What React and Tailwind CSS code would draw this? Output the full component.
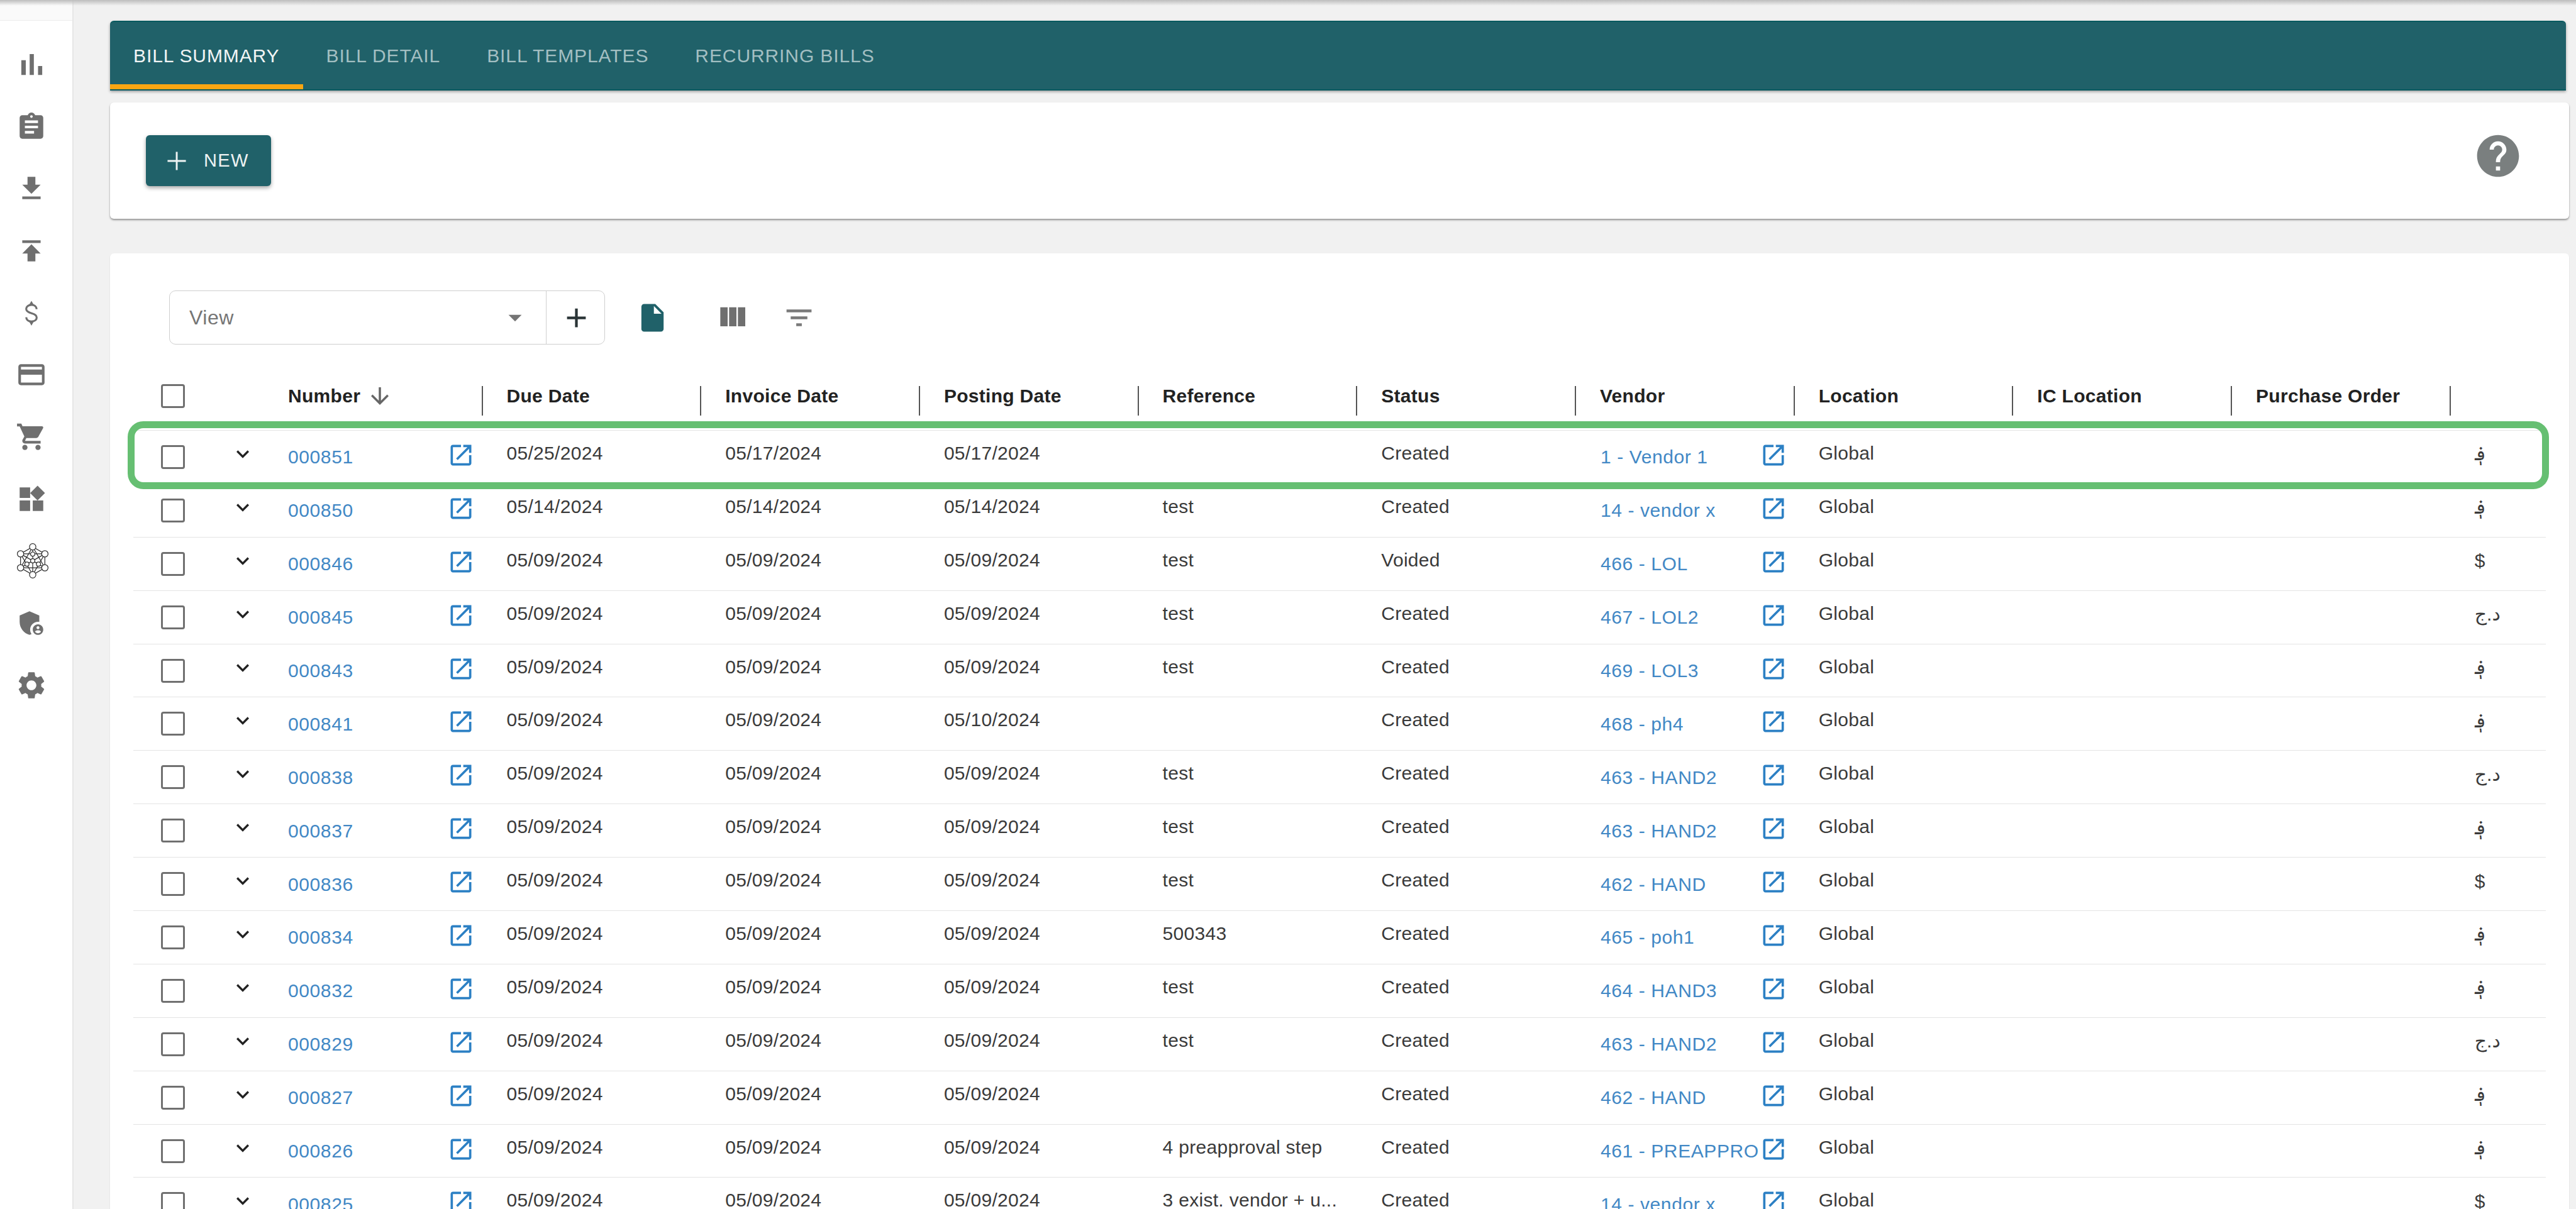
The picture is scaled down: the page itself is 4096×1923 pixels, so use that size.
const ICONS = {
  bar: 'M5 9.2h3V19H5zM10.6 5h2.8v14h-2.8zm5.6 8H19v6h-2.8z',
  assignment: 'M19 3h-4.18C14.4 1.84 13.3 1 12 1c-1.3 0-2.4.84-2.82 2H5c-1.1 0-2 .9-2 2v14c0 1.1.9 2 2 2h14c1.1 0 2-.9 2-2V5c0-1.1-.9-2-2-2zm-7 0c.55 0 1 .45 1 1s-.45 1-1 1-1-.45-1-1 .45-1 1-1zm2 14H7v-2h7v2zm3-4H7v-2h10v2zm0-4H7V7h10v2z',
  download: 'M19 9h-4V3H9v6H5l7 7 7-7zM5 18v2h14v-2H5z',
  publish: 'M5 4v2h14V4H5zm0 10h4v6h6v-6h4l-7-7-7 7z',
  card: 'M20 4H4c-1.11 0-1.99.89-1.99 2L2 18c0 1.11.89 2 2 2h16c1.11 0 2-.89 2-2V6c0-1.11-.89-2-2-2zm0 14H4v-6h16v6zm0-10H4V6h16v2z',
  cart: 'M7 18c-1.1 0-1.99.9-1.99 2S5.9 22 7 22s2-.9 2-2-.9-2-2-2zM1 2v2h2l3.6 7.59-1.35 2.45c-.16.28-.25.61-.25.96 0 1.1.9 2 2 2h12v-2H7.42c-.14 0-.25-.11-.25-.25l.03-.12.9-1.83h7.45c.75 0 1.41-.41 1.75-1.03l3.58-6.47c.08-.14.12-.31.12-.48 0-.55-.45-1-1-1H5.21l-.94-2H1zm16 16c-1.1 0-1.99.9-1.99 2s.89 2 1.99 2 2-.9 2-2-.9-2-2-2z',
  widgets: 'M13 13v8h8v-8h-8zM3 21h8v-8H3v8zM3 3v8h8V3H3zm13.66-1.31L11 7.34 16.66 13l5.66-5.66-5.66-5.65z',
  admin: 'M17 11c.34 0 .67.04 1 .09V6.27L10.5 3 3 6.27v4.91c0 4.54 3.2 8.79 7.5 9.82.55-.13 1.08-.32 1.6-.55-.69-.98-1.1-2.17-1.1-3.45 0-3.31 2.69-6 6-6zM17 13c-2.21 0-4 1.79-4 4s1.79 4 4 4 4-1.79 4-4-1.79-4-4-4zm0 1.38c.62 0 1.12.51 1.12 1.12s-.51 1.12-1.12 1.12-1.12-.51-1.12-1.12.5-1.12 1.12-1.12zm0 5.37c-.93 0-1.74-.46-2.24-1.17.05-.72 1.51-1.08 2.24-1.08s2.19.36 2.24 1.08c-.5.71-1.31 1.17-2.24 1.17z',
  settings: 'M19.14 12.94c.04-.3.06-.61.06-.94 0-.32-.02-.64-.07-.94l2.03-1.58c.18-.14.23-.41.12-.61l-1.92-3.32c-.12-.22-.37-.29-.59-.22l-2.39.96c-.5-.38-1.03-.7-1.62-.94l-.36-2.54c-.04-.24-.24-.41-.48-.41h-3.84c-.24 0-.43.17-.47.41l-.36 2.54c-.59.24-1.13.57-1.62.94l-2.39-.96c-.22-.08-.47 0-.59.22L2.74 8.87c-.12.21-.08.47.12.61l2.03 1.58c-.05.3-.09.63-.09.94s.02.64.07.94l-2.03 1.58c-.18.14-.23.41-.12.61l1.92 3.32c.12.22.37.29.59.22l2.39-.96c.5.38 1.03.7 1.62.94l.36 2.54c.05.24.24.41.48.41h3.84c.24 0 .44-.17.47-.41l.36-2.54c.59-.24 1.13-.56 1.62-.94l2.39.96c.22.08.47 0 .59-.22l1.92-3.32c.12-.22.07-.47-.12-.61l-2.01-1.58zM12 15.6c-1.98 0-3.6-1.62-3.6-3.6s1.62-3.6 3.6-3.6 3.6 1.62 3.6 3.6-1.62 3.6-3.6 3.6z',
  help: 'M12 2C6.48 2 2 6.48 2 12s4.48 10 10 10 10-4.48 10-10S17.52 2 12 2zm1 17h-2v-2h2v2zm2.07-7.75l-.9.92C13.45 12.9 13 13.5 13 15h-2v-.5c0-1.1.45-2.1 1.17-2.83l1.24-1.26c.37-.36.59-.86.59-1.41 0-1.1-.9-2-2-2s-2 .9-2 2H8c0-2.21 1.79-4 4-4s4 1.79 4 4c0 .88-.36 1.68-.93 2.25z',
  open: 'M19 19H5V5h7V3H5c-1.11 0-2 .9-2 2v14c0 1.1.89 2 2 2h14c1.1 0 2-.9 2-2v-7h-2v7zM14 3v2h3.59l-9.83 9.83 1.41 1.41L19 6.41V10h2V3h-7z',
  chevron: 'M7.41 8.59L12 13.17l4.59-4.58L18 10l-6 6-6-6 1.41-1.41z',
  add: 'M19 13h-6v6h-2v-6H5v-2h6V5h2v6h6v2z',
  addThin: 'M19 12.7h-6.3V19h-1.4v-6.3H5v-1.4h6.3V5h1.4v6.3H19z',
  arrowDown: 'M20 12l-1.41-1.41L13 16.17V4h-2v12.17l-5.58-5.59L4 12l8 8 8-8z',
  columns: 'M10 18h5V5h-5v13zm-6 0h5V5H4v13zM16 5v13h5V5h-5z',
  filter: 'M10 18h4v-2h-4v2zM3 6v2h18V6H3zm3 7h12v-2H6v2z',
  file: 'M6 2c-1.1 0-1.99.9-1.99 2L4 20c0 1.1.89 2 1.99 2H18c1.1 0 2-.9 2-2V8l-6-6H6zm7 7V3.5L18.5 9H13z',
  dropdown: 'M7 10l5 5 5-5z',
};

function Icon({ name, className }) {
  return (
    <svg viewBox="0 0 24 24" className={`shrink-0 ${className}`}>
      <path d={ICONS[name]} />
    </svg>
  );
}

// thin S with little peaks top and bottom, the filled material one is too heavy
function MoneyIcon() {
  return (
    <svg viewBox="0 0 24 24" className="h-[50px] w-[50px] shrink-0">
      <path
        d="M16 9c-.2-2-1.8-3.3-4-3.3S8 7 8 8.8c0 2 1.7 2.7 4 3.3s4 1.4 4 3.3c0 1.8-1.7 3-4 3s-3.8-1.3-4-3.2"
        fill="none"
        className="stroke-[#6f6f6f] stroke-[1.5]"
      />
      <path d="M12 2.6L10.2 5.8h3.6zM12 21.6l-1.8-3.2h3.6z" className="fill-[#6f6f6f]" />
    </svg>
  );
}

function NetworkIcon() {
  const nodes = [[12, 2.8], [20, 7.4], [20, 16.6], [12, 21.2], [4, 16.6], [4, 7.4]];
  const inner = [[12, 12], [12, 7.6], [15.8, 14.2], [8.2, 14.2]];
  return (
    <svg viewBox="0 0 24 24" className="ml-[4px] h-[58px] w-[58px] fill-white stroke-[#2b2b2b] stroke-[0.5]">
      <path
        d="M12 2.8L20 7.4V16.6L12 21.2 4 16.6V7.4zM12 2.8V21.2M4 7.4L20 16.6M20 7.4L4 16.6M12 2.8L20 16.6H4zM12 21.2L4 7.4H20z"
        fill="none"
      />
      {nodes.map(([cx, cy]) => (
        <circle key={`${cx}-${cy}`} cx={cx} cy={cy} r="2.1" />
      ))}
      {inner.map(([cx, cy]) => (
        <circle key={`${cx}-${cy}`} cx={cx} cy={cy} r="1.4" />
      ))}
    </svg>
  );
}

const SIDE_ICONS = [
  ['bar', 'h-[57px] w-[57px]'],
  ['assignment', 'h-[50px] w-[50px]'],
  ['download', 'h-[50px] w-[50px]'],
  ['publish', 'h-[50px] w-[50px]'],
  ['money', ''],
  ['card', 'h-[50px] w-[50px]'],
  ['cart', 'h-[50px] w-[50px]'],
  ['widgets', 'h-[50px] w-[50px]'],
  ['network', ''],
  ['admin', 'h-[50px] w-[50px]'],
  ['settings', 'h-[52px] w-[52px]'],
];

const TABS = ['Bill Summary', 'Bill Detail', 'Bill Templates', 'Recurring Bills'];

const HEADERS = ['Due Date', 'Invoice Date', 'Posting Date', 'Reference', 'Status'];
const HEADERS_AFTER = ['Location', 'IC Location', 'Purchase Order'];

const AFN = '؋';
const DZD = 'د.ج';

const ROWS = [
  ['000851', '05/25/2024', '05/17/2024', '05/17/2024', '', 'Created', '1 - Vendor 1', AFN],
  ['000850', '05/14/2024', '05/14/2024', '05/14/2024', 'test', 'Created', '14 - vendor x', AFN],
  ['000846', '05/09/2024', '05/09/2024', '05/09/2024', 'test', 'Voided', '466 - LOL', '$'],
  ['000845', '05/09/2024', '05/09/2024', '05/09/2024', 'test', 'Created', '467 - LOL2', DZD],
  ['000843', '05/09/2024', '05/09/2024', '05/09/2024', 'test', 'Created', '469 - LOL3', AFN],
  ['000841', '05/09/2024', '05/09/2024', '05/10/2024', '', 'Created', '468 - ph4', AFN],
  ['000838', '05/09/2024', '05/09/2024', '05/09/2024', 'test', 'Created', '463 - HAND2', DZD],
  ['000837', '05/09/2024', '05/09/2024', '05/09/2024', 'test', 'Created', '463 - HAND2', AFN],
  ['000836', '05/09/2024', '05/09/2024', '05/09/2024', 'test', 'Created', '462 - HAND', '$'],
  ['000834', '05/09/2024', '05/09/2024', '05/09/2024', '500343', 'Created', '465 - poh1', AFN],
  ['000832', '05/09/2024', '05/09/2024', '05/09/2024', 'test', 'Created', '464 - HAND3', AFN],
  ['000829', '05/09/2024', '05/09/2024', '05/09/2024', 'test', 'Created', '463 - HAND2', DZD],
  ['000827', '05/09/2024', '05/09/2024', '05/09/2024', '', 'Created', '462 - HAND', AFN],
  ['000826', '05/09/2024', '05/09/2024', '05/09/2024', '4 preapproval step', 'Created', '461 - PREAPPRO', AFN],
  ['000825', '05/09/2024', '05/09/2024', '05/09/2024', '3 exist. vendor + u...', 'Created', '14 - vendor x', '$'],
];

function Checkbox() {
  return <div className="ml-[44px] h-[38px] w-[38px] shrink-0 rounded-[4px] border-[3px] border-[#707070]" />;
}

function HeaderCell({ label, className }) {
  return (
    <div className={`flex h-full shrink-0 items-center ${className}`}>
      <span className="flex flex-1 items-center whitespace-nowrap">{label}</span>
      <span className="mt-[15px] h-[47px] w-[2px] bg-[#555]" />
    </div>
  );
}

function Cell({ children }) {
  return (
    <div className="w-[347.7px] shrink-0 whitespace-nowrap pb-[13px] pl-[38px]">{children}</div>
  );
}

function Row({ row }) {
  const [number, due, invoice, posting, reference, status, vendor, currency] = row;
  return (
    <div className="flex h-[84.9px] items-center border-b-[1.5px] border-[#e4e4e4] tracking-[0.3px] text-[#3a3a3a]">
      <div className="flex w-[246px] shrink-0 items-center">
        <Checkbox />
        <Icon name="chevron" className="mb-[10px] ml-[72px] h-[40px] w-[40px] fill-[#222]" />
      </div>
      <div className="flex w-[309.5px] shrink-0 items-center">
        <a className="flex-1 tracking-[0.6px] text-[#4288c5]">{number}</a>
        <Icon name="open" className="mb-[6px] mr-[13px] h-[44px] w-[44px] fill-[#2c80c4]" />
      </div>
      <Cell>{due}</Cell>
      <Cell>{invoice}</Cell>
      <Cell>{posting}</Cell>
      <Cell>{reference}</Cell>
      <Cell>{status}</Cell>
      <div className="flex w-[347.7px] shrink-0 items-center pl-[39px] pr-[12px]">
        <a className="min-w-0 flex-1 whitespace-nowrap tracking-[0.6px] text-[#4288c5]">{vendor}</a>
        <Icon name="open" className="mb-[6px] h-[44px] w-[44px] fill-[#2c80c4]" />
      </div>
      <Cell>Global</Cell>
      <Cell />
      <Cell />
      <div className="pb-[10px] pl-[38px]">{currency}</div>
    </div>
  );
}

export default function App() {
  return (
    <div className="relative flex h-[1923px] w-[4096px] overflow-hidden bg-[#f1f1f1] font-['Liberation_Sans','DejaVu_Sans',sans-serif] text-[30px]">
      {/* top shadow */}
      <div className="absolute inset-x-0 top-0 z-10 h-[9px] bg-gradient-to-b from-[#bdbdbd] to-transparent" />

      {/* Sidebar */}
      <aside className="w-[117px] shrink-0 border-r-[2px] border-[#e6e6e6] bg-white">
        <div className="h-[33px] border-b-[1.5px] border-[#ececec] bg-[#fafafa]" />
        <div className="flex w-[100px] flex-col pt-[20.5px]">
          {SIDE_ICONS.map(([name, size]) => (
            <div key={name} className="flex h-[98.7px] items-center justify-center">
              {name === 'network' && <NetworkIcon />}
              {name === 'money' && <MoneyIcon />}
              {name !== 'network' && name !== 'money' && <Icon name={name} className={`${size} fill-[#6f6f6f]`} />}
            </div>
          ))}
        </div>
      </aside>

      {/* Main */}
      <main className="min-w-0 flex-1 pl-[58px] pr-[11px] pt-[33px]">
        <div className="flex h-[111px] w-[3905px] overflow-hidden rounded-t-[6px] border-y-[2px] border-[#07595f] bg-[#206169] shadow-[0_2px_4px_rgba(0,0,0,0.35)]">
          {TABS.map((tab, i) => (
            <div
              key={tab}
              className={`flex h-full items-center border-b-[8px] px-[37px] pt-[8px] uppercase tracking-[0.9px] ${
                i === 0 ? 'border-[#f9a612] text-[#f1f5f5]' : 'border-transparent text-[#a3bfc2]'
              }`}
            >
              {tab}
            </div>
          ))}
        </div>

        <div className="mt-[19px] flex h-[185px] items-start justify-between rounded-[6px] bg-white pl-[57px] pr-[73px] pt-[45px] shadow-[0_2px_3px_rgba(0,0,0,0.4)]">
          <button className="mt-[7px] flex h-[81px] w-[199px] items-center rounded-[6px] bg-[#206169] pl-[24px] text-[29px] tracking-[1.3px] text-[#eef3f3] shadow-[0_3px_6px_rgba(0,0,0,0.35)]">
            <Icon name="addThin" className="h-[50px] w-[50px] fill-[#eef3f3]" />
            <span className="ml-[18px]">NEW</span>
          </button>
          <Icon name="help" className="h-[80px] w-[80px] fill-[#7a7f7f]" />
        </div>

        <div className="mt-[55px] h-[1600px] rounded-[6px] bg-white px-[37px] pt-[59px] shadow-[0_1px_2px_rgba(0,0,0,0.12)]">
          {/* Toolbar */}
          <div className="flex h-[86px] items-center pl-[57px]">
            <div className="flex h-[86px] w-[693px] rounded-[10px] border-[1.5px] border-[#cfcfcf]">
              <div className="flex flex-1 items-center justify-between pl-[31px] pr-[24px] text-[32px] tracking-[0.5px] text-[#757575]">
                <span>View</span>
                <Icon name="dropdown" className="h-[50px] w-[50px] fill-[#757575]" />
              </div>
              <div className="flex w-[93px] items-center justify-center border-l-[1.5px] border-[#cfcfcf]">
                <Icon name="add" className="ml-[2px] h-[51px] w-[51px] fill-[#2a3436]" />
              </div>
            </div>
            <Icon name="file" className="ml-[49px] h-[53px] w-[53px] fill-[#206169]" />
            <Icon name="columns" className="ml-[72px] h-[56px] w-[56px] fill-[#6f6f6f]" />
            <Icon name="filter" className="ml-[52px] h-[53px] w-[53px] fill-[#7a7a7a]" />
          </div>

          {/* Table */}
          <div className="mt-[27px] flex h-[110px] items-center border-b-[1.5px] border-[#e4e4e4] font-bold tracking-[0.3px] text-[#222]">
            <div className="flex w-[246px] shrink-0 items-center">
              <Checkbox />
            </div>
            <HeaderCell
              className="w-[309.5px]"
              label={
                <>
                  Number
                  <Icon name="arrowDown" className="ml-[10px] h-[42px] w-[42px] fill-[#666]" />
                </>
              }
            />
            {HEADERS.map((h) => (
              <HeaderCell key={h} label={h} className="w-[347.7px] pl-[38px]" />
            ))}
            <HeaderCell label="Vendor" className="w-[347.7px] pl-[38px]" />
            {HEADERS_AFTER.map((h) => (
              <HeaderCell key={h} label={h} className="w-[347.7px] pl-[38px]" />
            ))}
          </div>

          <div className="relative">
            {ROWS.map((row) => (
              <Row key={row[0]} row={row} />
            ))}
            {/* highlight on the first row */}
            <div className="absolute left-[-9.5px] top-[-15px] h-[108px] w-[3850.5px] rounded-[25px] border-[11px] border-[#66bf72]" />
          </div>
        </div>
      </main>
    </div>
  );
}
